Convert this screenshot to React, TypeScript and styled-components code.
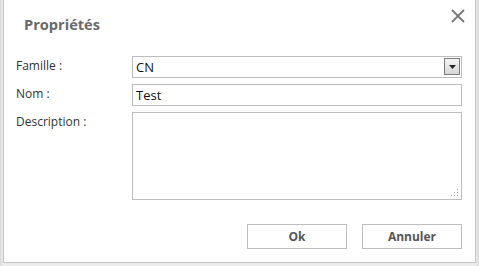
import React from "react";
import styled, { createGlobalStyle } from "styled-components";

const Global = createGlobalStyle`
  html, body { margin: 0; padding: 0; background: #ffffff; }
  body { font-family: "Open Sans", "Liberation Sans", sans-serif; }
  * { box-sizing: border-box; }
`;

const Frame = styled.div`
  width: 479px;
  height: 266px;
  padding: 0 3px 3px 3px;
  background: linear-gradient(to right, #d8d8d8, #ececec 3px, #ececec calc(100% - 3px), #d8d8d8);
`;

const Dialog = styled.div`
  width: 473px;
  height: 263px;
  background: #fff;
  border: 1px solid #c4c4c4;
  border-top: none;
  display: flex;
  flex-direction: column;
`;

const Header = styled.div`
  display: flex;
  align-items: flex-start;
  justify-content: space-between;
  height: 46px;
  padding: 14px 8px 0 20px;
`;

const Title = styled.h1`
  margin: 0;
  font-size: 14.6px;
  line-height: 20px;
  font-weight: 700;
  color: #6a6a6a;
`;

const CloseButton = styled.button`
  width: 18px;
  height: 18px;
  padding: 0;
  border: none;
  background: none;
  display: flex;
  align-items: center;
  justify-content: center;
  margin-top: -7px;
`;

const Form = styled.div`
  display: grid;
  grid-template-columns: 116px 330px;
  row-gap: 6px;
  padding: 10px 0 0 12px;
`;

const Label = styled.label`
  font-size: 12px;
  color: #333;
  line-height: 16px;
  padding-top: 2px;
`;

const FieldBox = styled.div<{ $h: number }>`
  height: ${(p) => p.$h}px;
  border: 1px solid #bdbdbd;
  background: #fff;
  display: flex;
  align-items: flex-start;
  position: relative;
  font-size: 13px;
  color: #111;
  padding: 2px 3px 0 3px;
  line-height: 16px;
`;

const SelectText = styled.span`
  flex: 1;
`;

const ArrowBox = styled.span`
  width: 16px;
  height: 17px;
  margin-top: -1px;
  margin-right: -2px;
  border: 1px solid #7a7a7a;
  background: linear-gradient(#f4f4f4, #d6d6d6);
  display: flex;
  align-items: center;
  justify-content: center;
`;

const Grip = styled.svg`
  position: absolute;
  right: 2px;
  bottom: 2px;
`;

const Footer = styled.div`
  margin-top: auto;
  display: flex;
  justify-content: flex-end;
  gap: 15px;
  padding: 0 13px 13px 0;
`;

const Button = styled.button`
  width: 100px;
  height: 25px;
  border: 1px solid #bdbdbd;
  background: #fff;
  font-family: "Open Sans", "Liberation Sans", sans-serif;
  font-size: 12px;
  font-weight: 700;
  color: #555;
  padding: 0;
`;

export default function App() {
  return (
    <>
      <Global />
      <Frame>
        <Dialog>
          <Header>
            <Title>Propriétés</Title>
            <CloseButton aria-label="Fermer">
              <svg width="14" height="14" viewBox="0 0 14 14">
                <path d="M1 1 L13 13 M13 1 L1 13" stroke="#777" strokeWidth="1.8" />
              </svg>
            </CloseButton>
          </Header>
          <Form>
            <Label>Famille :</Label>
            <FieldBox $h={22}>
              <SelectText>CN</SelectText>
              <ArrowBox>
                <svg width="7" height="4" viewBox="0 0 7 4">
                  <path d="M0 0 H7 L3.5 4 Z" fill="#222" />
                </svg>
              </ArrowBox>
            </FieldBox>
            <Label>Nom :</Label>
            <FieldBox $h={22}>Test</FieldBox>
            <Label>Description :</Label>
            <FieldBox $h={88}>
              <Grip width="8" height="8" viewBox="0 0 8 8">
                <g fill="#aaa">
                  <rect x="6" y="0" width="1" height="1" />
                  <rect x="6" y="3" width="1" height="1" />
                  <rect x="3" y="3" width="1" height="1" />
                  <rect x="6" y="6" width="1" height="1" />
                  <rect x="3" y="6" width="1" height="1" />
                  <rect x="0" y="6" width="1" height="1" />
                </g>
              </Grip>
            </FieldBox>
          </Form>
          <Footer>
            <Button>Ok</Button>
            <Button>Annuler</Button>
          </Footer>
        </Dialog>
      </Frame>
    </>
  );
}
